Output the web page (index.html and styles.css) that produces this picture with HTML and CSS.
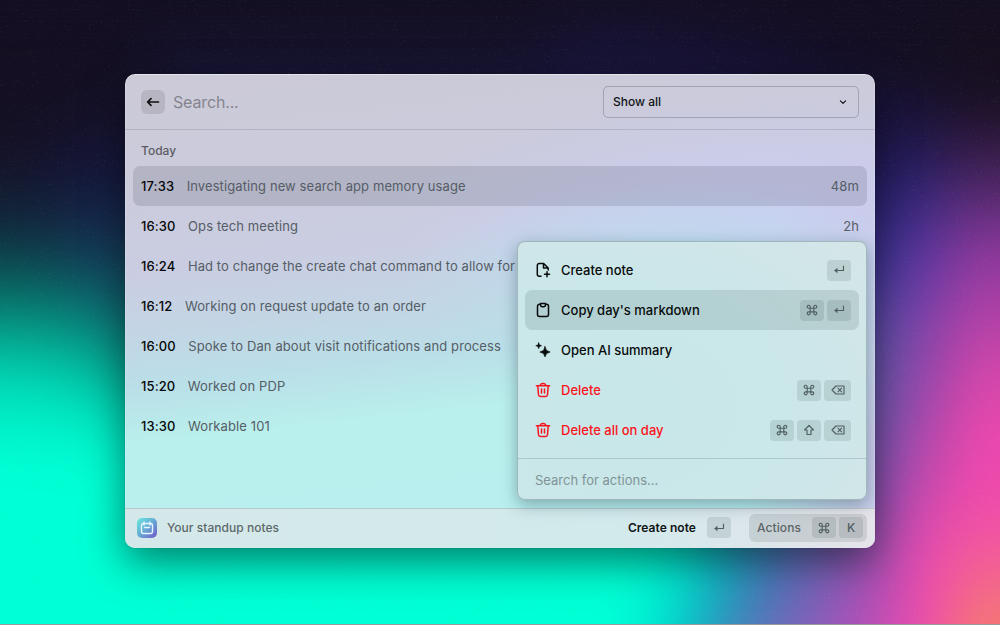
FILE: index.html
```html
<!DOCTYPE html>
<html lang="en">
<head>
<meta charset="utf-8">
<title>Standup notes</title>
<link rel="stylesheet" href="styles.css">
</head>
<body>
<svg class="sprite" aria-hidden="true">
  <symbol id="cmd" viewBox="0 0 12 12"><path d="M4.200 4.200h3.600v3.600H4.200zM4.200 4.200H2.900A1.500 1.500 0 1 1 4.200 2.700zM7.800 4.200V2.700A1.500 1.500 0 1 1 9.300 4.200zM7.800 7.800h1.500A1.500 1.500 0 1 1 7.800 9.300zM4.200 7.800v1.500A1.500 1.500 0 1 1 2.700 7.800z"/></symbol>
  <symbol id="enter" viewBox="0 0 12 12"><path d="M10.500 2v4.500H2"/><path d="M4 4.500 1.600 6.500 4 8.500z" fill="currentColor" stroke-width=".6"/></symbol>
  <symbol id="erase" viewBox="0 0 14 12"><path d="M5 2h8v8H5L1 6zM7 4.200l3.600 3.600M10.600 4.200 7 7.800"/></symbol>
  <symbol id="shift" viewBox="0 0 12 12"><path d="M6 1.300 10.500 6H8v4.500H4V6H1.500z"/></symbol>
  <symbol id="trash" viewBox="0 0 16 16"><path d="M1.400 3.700h13.200M5.200 3.500c.2-1.400 1-2 2.800-2s2.600.6 2.800 2M2.800 4l.7 8.700c.1 1.100.8 1.800 1.900 1.800h5.200c1.100 0 1.800-.7 1.900-1.800L13.200 4M6.500 7V11M9.500 7V11"/></symbol>
</svg>
<main class="desktop">
  <div class="wallpaper"><i class="c1 edge"></i><i class="c1"></i><i class="c2"></i><i class="c3"></i><i class="c4 mid"></i><i class="c5"></i><i class="c6"></i><i class="c7"></i><i class="c8"></i><i class="c9"></i><i class="c10"></i><i class="c11"></i><i class="c12"></i><i class="c13"></i></div>
  <svg class="grain" width="1000" height="625"><filter id="specks" x="0" y="0" width="100%" height="100%"><feTurbulence type="fractalNoise" baseFrequency=".75" numOctaves="2" seed="7"/><feColorMatrix values="0 0 0 0 1  0 0 0 0 1  0 0 0 0 1  7 0 0 0 -4.700"/></filter><rect width="1000" height="625" filter="url(#specks)"/></svg>
  <section class="window">
    <header class="top">
      <button class="back"><svg viewBox="0 0 16 16"><path d="M13.500 8H3M6 4.600 2.600 8 6 11.400"/></svg></button>
      <span class="query">Search...</span>
      <div class="select"><span>Show all</span><svg viewBox="0 0 8 8"><path d="m1.400 2.800 2.600 2.600 2.600-2.600"/></svg></div>
    </header>
    <div class="list">
      <h2>Today</h2>
      <div class="row active"><b>17:33</b><span>Investigating new search app memory usage</span><em>48m</em></div>
      <div class="row"><b>16:30</b><span>Ops tech meeting</span><em>2h</em></div>
      <div class="row"><b>16:24</b><span>Had to change the create chat command to allow for</span></div>
      <div class="row"><b>16:12</b><span>Working on request update to an order</span></div>
      <div class="row"><b>16:00</b><span>Spoke to Dan about visit notifications and process</span></div>
      <div class="row"><b>15:20</b><span>Worked on PDP</span></div>
      <div class="row"><b>13:30</b><span>Workable 101</span></div>
    </div>
    <footer class="bar">
      <svg class="logo" viewBox="0 0 20 20"><defs><linearGradient id="lg" x2="1" y2="1"><stop stop-color="#68eadc"/><stop offset=".5" stop-color="#68a9d5"/><stop offset="1" stop-color="#7258c6"/></linearGradient></defs><rect width="20" height="20" rx="5" fill="url(#lg)"/><path d="M6.500 5.500h7a2 2 0 0 1 2 2v6a2 2 0 0 1-2 2h-7a2 2 0 0 1-2-2v-6a2 2 0 0 1 2-2zM7 4v3M13 4v3M7.500 9.500h5" fill="none" stroke="#e4f6ff" stroke-width="1.400" stroke-linecap="round"/></svg>
      <span class="caption">Your standup notes</span>
      <strong>Create note</strong>
      <kbd><svg><use href="#enter"/></svg></kbd>
      <div class="actions"><span>Actions</span><kbd><svg><use href="#cmd"/></svg></kbd><kbd>K</kbd></div>
    </footer>
  </section>
  <aside class="menu">
    <div class="items">
      <div class="item"><svg class="ico" viewBox="0 0 16 16"><path d="M6 14.200H4.300a2 2 0 0 1-2-2V3.500a2 2 0 0 1 2-2h4.400L13.200 6v2M8.500 1.700V6h4.500M12 9.800v5M9.500 12.300h5"/></svg><span>Create note</span><kbd><svg><use href="#enter"/></svg></kbd></div>
      <div class="item chosen"><svg class="ico" viewBox="0 0 16 16"><path d="M5.500 2.200h-1a2 2 0 0 0-2 2v8.300a2 2 0 0 0 2 2h7a2 2 0 0 0 2-2V4.200a2 2 0 0 0-2-2h-1M5.500 1.500h5v1.200a2 2 0 0 1-2 2h-1a2 2 0 0 1-2-2z"/></svg><span>Copy day's markdown</span><kbd><svg><use href="#cmd"/></svg></kbd><kbd><svg><use href="#enter"/></svg></kbd></div>
      <div class="item"><svg class="ico solid" viewBox="0 0 16 16"><path d="M10 4.500 11.500 8.400 15.200 10 11.500 11.600 10 15 8.500 11.600 4.800 10 8.500 8.400zM3.700.8l.8 2.100 2.100.8-2.100.8-.8 2.100-.8-2.100L.8 3.700l2.100-.8z"/></svg><span>Open AI summary</span></div>
      <div class="item danger"><svg class="ico"><use href="#trash"/></svg><span>Delete</span><kbd><svg><use href="#cmd"/></svg></kbd><kbd class="wide"><svg><use href="#erase"/></svg></kbd></div>
      <div class="item danger"><svg class="ico"><use href="#trash"/></svg><span>Delete all on day</span><kbd><svg><use href="#cmd"/></svg></kbd><kbd><svg><use href="#shift"/></svg></kbd><kbd class="wide"><svg><use href="#erase"/></svg></kbd></div>
    </div>
    <div class="find">Search for actions...</div>
  </aside>
</main>
</body>
</html>
```

FILE: styles.css
```css
* { box-sizing: border-box; }
body { margin: 0; background: #140f22; font: 400 13px/20px Inter, sans-serif; color: #101416; }
svg { fill: none; stroke: currentColor; stroke-linecap: round; stroke-linejoin: round; flex: none; }
.sprite { position: absolute; width: 0; height: 0; }
.desktop { position: relative; width: 1000px; height: 625px; overflow: hidden; display: flex; align-items: flex-start; justify-content: center; padding-top: 74px; border-bottom: 1px solid #989b9c; }

/* Wallpaper: vertical colour ramps blended sideways by a blur */
.wallpaper { position: absolute; inset: 0 -100px -100px; display: flex; filter: blur(27px); }
.wallpaper i { flex: none; width: 50px; }
.wallpaper .edge { width: 100px; }
.wallpaper .mid { width: 400px; }
.c1 { background: linear-gradient(#140f22 120px, #14132a 170px, #10293d 230px, #08665f 290px, #04a38c 335px, #00d9b7 380px, #00fbd1 445px, #00ffd5 460px); }
.c2 { background: linear-gradient(#140f22 100px, #15163a 180px, #13304c 240px, #0b5f66 290px, #04a38c 345px, #00d9b7 390px, #00ffd5 460px); }
.c3 { background: linear-gradient(#140f22 80px, #161a42 190px, #143c5c 260px, #0d6c72 320px, #04a38c 370px, #00e0bd 420px, #00ffd5 470px); }
.c4 { background: linear-gradient(#140f22 20px, #161638 90px, #181c48 200px, #12666f 300px, #00d9b7 410px, #00ffd5 470px); }
.c5, .c6 { background: linear-gradient(#140f22 0, #19163f 75px, #191744 200px, #00d9b7 400px, #00ffd5 500px); }
.c7 { background: linear-gradient(#140f22 0, #19153e 80px, #191744 200px, #00d9b7 400px, #00f6d2 540px, #00cfcb 640px); }
.c8 { background: linear-gradient(#140f22 10px, #18133a 80px, #191744 200px, #1f99b0 450px, #0aafc0 560px, #3a88ba 640px); }
.c9 { background: linear-gradient(#140f22 20px, #17133a 90px, #191744 200px, #3080b0 450px, #4573b6 560px, #6c6cbb 640px); }
.c10 { background: linear-gradient(#140f22 40px, #17123a 100px, #202063 190px, #40359a 290px, #5a67b0 480px, #7560b5 560px, #9559bb 640px); }
.c11 { background: linear-gradient(#140f22 60px, #1b1545 130px, #241e68 195px, #3c3596 270px, #5c52a8 330px, #6a5cb0 400px, #8050b0 480px, #a44db2 560px, #c04cb6 630px); }
.c12 { background: linear-gradient(#150f22 80px, #221850 150px, #3b2a80 200px, #5a359c 250px, #7a40a8 310px, #9044a8 370px, #a846aa 425px, #c847ac 485px, #ee48b0 560px, #f04cac 630px); }
.wallpaper .c13 { flex: 1; background: linear-gradient(#160f20 100px, #30193f 140px, #50286a 190px, #88379a 245px, #a83fa5 300px, #cf46aa 365px, #ea48ad 430px, #f048ae 490px, #f25a9c 550px, #f57a70 630px); }
.grain { position: absolute; inset: 0; opacity: .07; stroke: none; }

.window { position: relative; width: 750px; height: 474px; border-radius: 10px; overflow: hidden; display: flex; flex-direction: column;
  background:
    radial-gradient(ellipse 130px 330px at 100% 80%, #cac8e8 0, #cac8e800 100%),
    radial-gradient(ellipse 280px 100px at 74% 44%, #b8e0ec 0, #b8e0ec00 100%),
    radial-gradient(ellipse 380px 130px at 86% 31%, #cccdf2 0, #cccdf200 100%),
    linear-gradient(174deg, #cccad7 0, #cbcbdc 22%, #cacde2 36%, #c3d5e4 47%, #badfe8 57%, #b9efec 67%, #b9f0f1 100%);
  box-shadow: 0 0 1px rgba(0,0,0,.5), 0 14px 40px rgba(0,0,0,.5), inset 0 1px rgba(255,255,255,.4), inset 0 0 0 1px rgba(255,255,255,.18); }
.top { height: 56px; flex: none; display: flex; align-items: center; padding: 0 16px; border-bottom: 1px solid rgba(40,40,70,.14); }
.back { width: 24px; height: 24px; border: 0; border-radius: 6px; padding: 4px; background: rgba(0,0,0,.1); color: #111; }
.back svg { display: block; width: 16px; height: 16px; stroke-width: 1.7; }
.query { margin-left: 8px; font-size: 16px; letter-spacing: -.15px; color: #85848f; }
.select { margin-left: auto; width: 256px; height: 32px; border: 1px solid rgba(30,30,50,.23); border-radius: 5px; padding: 0 11px 0 9px; display: flex; align-items: center; justify-content: space-between; font-size: 12px; font-weight: 500; }
.select svg { width: 8px; height: 8px; stroke-width: 1.2; }
.list { flex: 1; padding: 11px 8px 0; }
h2 { margin: 0 8px 5px; font-size: 12px; line-height: 20px; font-weight: 500; color: #5c5c65; }
.row { height: 40px; padding: 0 8px; border-radius: 7px; display: flex; align-items: center; letter-spacing: .1px; }
.row.active { background: rgba(20,30,50,.13); }
.row b { font-weight: 450; margin-right: 12.5px; color: #050708; }
.row span, .row em { color: #555d65; font-style: normal; }
.row em { margin-left: auto; }
.bar { height: 40px; flex: none; display: flex; align-items: center; padding: 0 8px 2px 12px; font-size: 12px; font-weight: 500; background: linear-gradient(90deg, #d5e8e9 0, #d2eaec 65%, #e5e3ea 100%); border-top: 1px solid rgba(60,80,90,.2); }
.logo { width: 20px; height: 20px; stroke: none; }
.caption { margin-left: 10px; color: #5c686b; letter-spacing: .03px; }
.bar strong { margin-left: auto; font-weight: 600; letter-spacing: .05px; }
.bar > kbd { margin-left: 11px; }
kbd { width: 24px; height: 21px; border-radius: 4px; display: flex; align-items: center; justify-content: center; background: rgba(30,60,60,.12); color: #506061; font: 500 12px Inter, sans-serif; }
kbd svg { width: 12px; height: 12px; stroke-width: 1.15; }
kbd.wide { width: 27px; }
kbd.wide svg { width: 14px; }
.actions { margin-left: 18px; height: 28px; width: 118px; padding: 0 4px 0 8px; border-radius: 6px; display: flex; align-items: center; gap: 3px; background: rgba(30,50,50,.12); color: #5b6567; }
.actions span { margin-right: auto; letter-spacing: .1px; }

/* Action menu over the list */
.menu { position: absolute; left: 517px; top: 241px; width: 350px; height: 259px; border: 1px solid rgba(90,115,120,.4); border-radius: 8px; display: flex; flex-direction: column; background: radial-gradient(ellipse 360px 260px at 28% 65%, #c8e7e8 0, #cae7e9 45%, #d6e5e8 100%); box-shadow: 0 5px 16px rgba(20,50,65,.36); }
.items { flex: 1; padding: 8px 7px; }
.item { height: 40px; display: flex; align-items: center; gap: 3px; padding: 0 8px 0 10px; border-radius: 7px; font-weight: 450; color: #080b0c; }
.item.chosen { background: rgba(30,60,60,.13); }
.ico { width: 16px; height: 16px; stroke-width: 1.5; margin-right: 7px; }
.ico.solid { fill: currentColor; stroke-width: .6; }
.item span { margin-right: auto; }
.item.danger { color: #fa1420; }
.find { height: 41px; border-top: 1px solid rgba(60,90,95,.22); padding: 11px 17px; color: #7f9496; }
```
